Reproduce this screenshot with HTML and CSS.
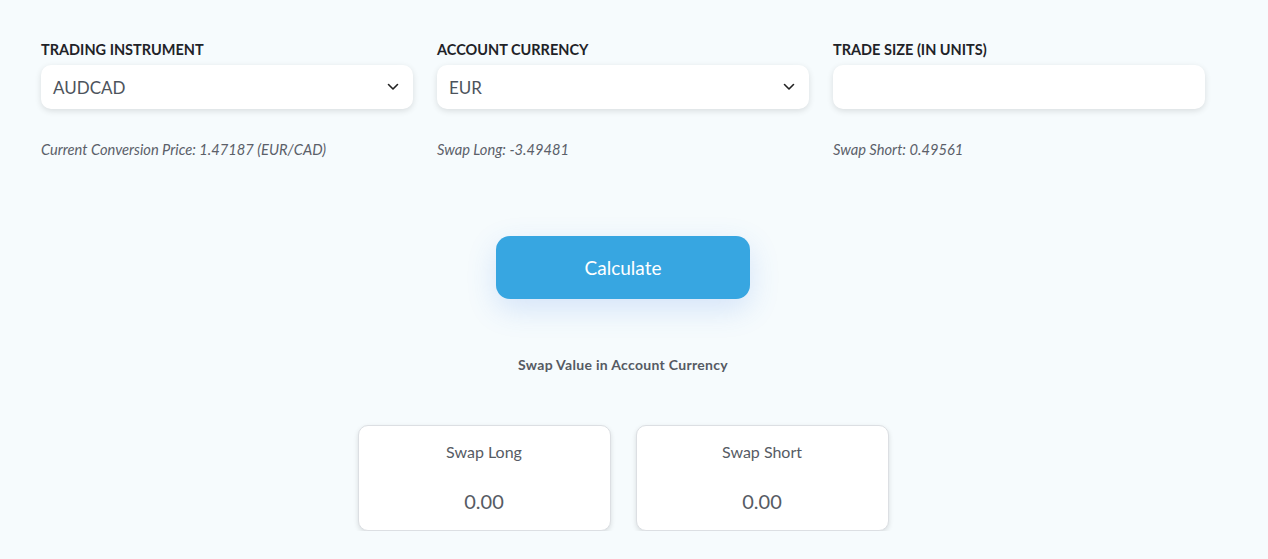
FILE: index.html
```html
<!DOCTYPE html>
<html lang="en">

<head>
    <meta charset="UTF-8">
    <meta name="viewport" content="width=device-width, initial-scale=1.0">
    <title>Swap Calculator</title>
    <link rel="stylesheet" href="styles.css">
</head>

<body>
    <div class="calculator">
        <div class="fields">
            <div class="field">
                <label class="label">TRADING INSTRUMENT</label>
                <div class="select">
                    <span>AUDCAD</span>
                    <svg class="chevron" width="12" height="8" viewBox="0 0 12 8"><path d="M1.5 1.5 6 6l4.5-4.5" fill="none" stroke="#222" stroke-width="1.6" stroke-linecap="round" stroke-linejoin="round"/></svg>
                </div>
                <p class="note">Current Conversion Price: 1.47187 (EUR/CAD)</p>
            </div>
            <div class="field">
                <label class="label">ACCOUNT CURRENCY</label>
                <div class="select">
                    <span>EUR</span>
                    <svg class="chevron" width="12" height="8" viewBox="0 0 12 8"><path d="M1.5 1.5 6 6l4.5-4.5" fill="none" stroke="#222" stroke-width="1.6" stroke-linecap="round" stroke-linejoin="round"/></svg>
                </div>
                <p class="note">Swap Long: -3.49481</p>
            </div>
            <div class="field">
                <label class="label">TRADE SIZE (IN UNITS)</label>
                <input type="text" class="select input">
                <p class="note">Swap Short: 0.49561</p>
            </div>
        </div>

        <div class="actions">
            <button class="calc-btn">Calculate</button>
            <h4 class="result-title">Swap Value in Account Currency</h4>
            <div class="results">
                <div class="card">
                    <div class="card-title">Swap Long</div>
                    <div class="card-value">0.00</div>
                </div>
                <div class="card">
                    <div class="card-title">Swap Short</div>
                    <div class="card-value">0.00</div>
                </div>
            </div>
        </div>
    </div>
</body>

</html>
```

FILE: styles.css
```css
body {
    margin: 0;
    background-color: #f6fbfd;
    font-family: Lato, "Noto Sans", sans-serif;
    color: #4d535c;
}

.calculator {
    width: 1164px;
    padding: 41px 0 0 41px;
}

.fields {
    display: grid;
    grid-template-columns: repeat(3, 372px);
    gap: 24px;
}

.field {
    display: flex;
    flex-direction: column;
}

.label {
    font-size: 14.5px;
    font-weight: 700;
    color: #1f2328;
    line-height: 18px;
    margin-bottom: 6px;
}

.select {
    height: 44px;
    box-sizing: border-box;
    background: white;
    border: none;
    border-radius: 10px;
    box-shadow: 0 2px 6px rgba(0, 0, 0, 0.12);
    display: flex;
    align-items: center;
    justify-content: space-between;
    padding: 0 14px 0 12px;
    font-size: 17px;
    color: #4d535c;
}

.input {
    width: 100%;
    font-family: inherit;
}

.note {
    margin: 31px 0 0 0;
    font-size: 14.7px;
    font-style: italic;
    color: #5b6069;
    line-height: 18px;
}

.actions {
    display: flex;
    flex-direction: column;
    align-items: center;
}

.calc-btn {
    margin-top: 78px;
    width: 254px;
    height: 63px;
    border: none;
    border-radius: 14px;
    background: #37a6e1;
    color: white;
    font-family: inherit;
    font-size: 19px;
    cursor: pointer;
    box-shadow: 0 10px 30px rgba(55, 120, 225, 0.18);
}

.result-title {
    margin: 57px 0 0 0;
    font-size: 14px;
    font-weight: 700;
    color: #555a63;
    letter-spacing: 0.3px;
    line-height: 18px;
}

.results {
    margin-top: 51px;
    display: flex;
    gap: 25px;
}

.card {
    width: 253px;
    height: 106px;
    box-sizing: border-box;
    background: white;
    border: 1px solid #dcdfe3;
    border-radius: 10px;
    box-shadow: 0 2px 5px rgba(0, 0, 0, 0.12);
    text-align: center;
}

.card-title {
    margin-top: 16px;
    font-size: 16px;
    line-height: 20px;
    color: #565b64;
}

.card-value {
    margin-top: 27px;
    font-size: 20px;
    line-height: 24px;
    color: #565b64;
}
```
